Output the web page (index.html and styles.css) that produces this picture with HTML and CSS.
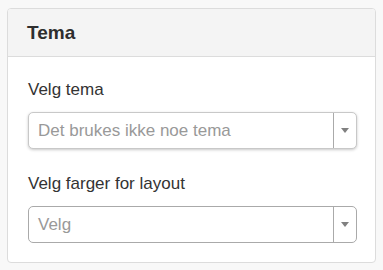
FILE: index.html
```html
<!DOCTYPE html>
<html>
<head>
<meta charset="utf-8">
<link rel="stylesheet" href="styles.css">
</head>
<body>
<div class="panel">
  <div class="panel-head">Tema</div>
  <div class="panel-body">
    <div class="field">
      <div class="label">Velg tema</div>
      <div class="select focused">
        <span class="placeholder">Det brukes ikke noe tema</span>
        <span class="arrow"><svg width="8" height="5" viewBox="0 0 8 5"><path d="M0 0H8L4 5Z" fill="#808080"/></svg></span>
      </div>
    </div>
    <div class="field">
      <div class="label">Velg farger for layout</div>
      <div class="select">
        <span class="placeholder">Velg</span>
        <span class="arrow"><svg width="8" height="5" viewBox="0 0 8 5"><path d="M0 0H8L4 5Z" fill="#808080"/></svg></span>
      </div>
    </div>
  </div>
</div>
</body>
</html>
```
FILE: styles.css
```css
html, body {
  margin: 0;
  background: #f8f8f8;
}
body {
  padding: 8px 7px 9px 7px;
  font-family: "Liberation Sans", Arial, sans-serif;
  color: #333;
}
.panel {
  width: 369px;
  box-sizing: border-box;
  border: 1px solid #dcdcdc;
  border-radius: 4px;
  background: #fff;
  overflow: hidden;
}
.panel-head {
  background: #f4f4f4;
  border-bottom: 1px solid #dcdcdc;
  height: 48px;
  box-sizing: border-box;
  padding: 13px 19px 0;
  font-size: 19px;
  font-weight: bold;
  line-height: 22px;
  color: #2e2e2e;
}
.panel-body {
  padding: 23px 19px 19px 20px;
  display: flex;
  flex-direction: column;
  gap: 25px;
}
.field {
  display: flex;
  flex-direction: column;
  gap: 12px;
}
.label {
  font-size: 17px;
  line-height: 20px;
  color: #333;
}
.select {
  height: 37px;
  width: 329px;
  box-sizing: border-box;
  border: 1px solid #aaa;
  border-radius: 5px;
  display: flex;
  align-items: stretch;
  background: #fff;
}
.select.focused {
  border-color: #c8c8c8;
  box-shadow: 0 1px 3px rgba(0,0,0,0.22);
}
.placeholder {
  flex: 1;
  padding-left: 9px;
  font-size: 17px;
  line-height: 35px;
  color: #999;
  white-space: nowrap;
}
.arrow {
  width: 22px;
  border-left: 1px solid #aaa;
  display: flex;
  align-items: center;
  justify-content: center;
}
.arrow svg { display: block; }
```
